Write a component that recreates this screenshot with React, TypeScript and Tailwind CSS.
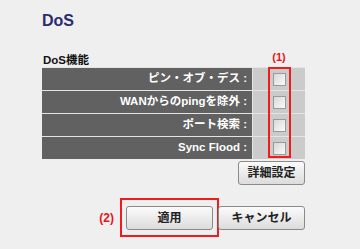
const rows = ["ピン・オブ・デス :", "WANからのpingを除外 :", "ポート検索 :", "Sync Flood :"];

const font = { fontFamily: '"Liberation Sans", "Noto Sans CJK JP", sans-serif' };

function Box() {
  return (
    <span className="block w-[13px] h-[13px] border border-[#9a9a9a] bg-gradient-to-br from-[#d8d8d8] to-[#fafafa]" />
  );
}

function Btn({ label, w }: { label: string; w: string }) {
  return (
    <button
      className={`${w} h-[24px] rounded-[3px] border border-[#8a8a8a] bg-gradient-to-b from-[#fbfbfb] to-[#dcdcdc] text-[12px] font-bold text-[#222] leading-none`}
    >
      {label}
    </button>
  );
}

export default function App() {
  return (
    <div className="w-[360px] h-[249px] bg-[#efefef] overflow-hidden" style={font}>
      <div className="pl-[42px] pt-[12px]">
        <h1 className="text-[16px] font-bold text-[#2a2a72] leading-[18px]">DoS</h1>
        <div className="relative mt-[20px] w-[263px]">
          <div className="flex items-end justify-between h-[16px]">
            <span className="text-[11.5px] font-bold text-[#111] leading-none pl-[1px]">DoS機能</span>
            <span className="text-[11px] font-bold text-[#e8141c] leading-none w-[52px] text-center mb-[3px]">(1)</span>
          </div>
          <div className="mt-[1px] flex flex-col gap-[1px] bg-[#e4e4e4] pt-[1px]">
            {rows.map((r) => (
              <div key={r} className="flex gap-[1px] h-[22px]">
                <div className="w-[210px] bg-[#616161] text-white text-[11.5px] font-bold flex items-center justify-end pr-[5px]">
                  {r}
                </div>
                <div className="flex-1 bg-[#cbcbcb] flex items-center justify-center">
                  <Box />
                </div>
              </div>
            ))}
          </div>
          <div className="absolute left-[226px] top-[17px] w-[23px] h-[91px] border-2 border-[#f01c1c]" />
          <div className="flex justify-end mt-[2px]">
            <Btn label="詳細設定" w="w-[67px]" />
          </div>
          <div className="flex items-center mt-[13px]">
            <span className="w-[78px] text-right pr-[6px] text-[12px] font-bold text-[#e8141c]">(2)</span>
            <div className="border-2 border-[#f01c1c] px-[4px] py-[5px]">
              <Btn label="適用" w="w-[87px]" />
            </div>
            <Btn label="キャンセル" w="w-[87px] ml-[-1px]" />
          </div>
        </div>
      </div>
    </div>
  );
}
